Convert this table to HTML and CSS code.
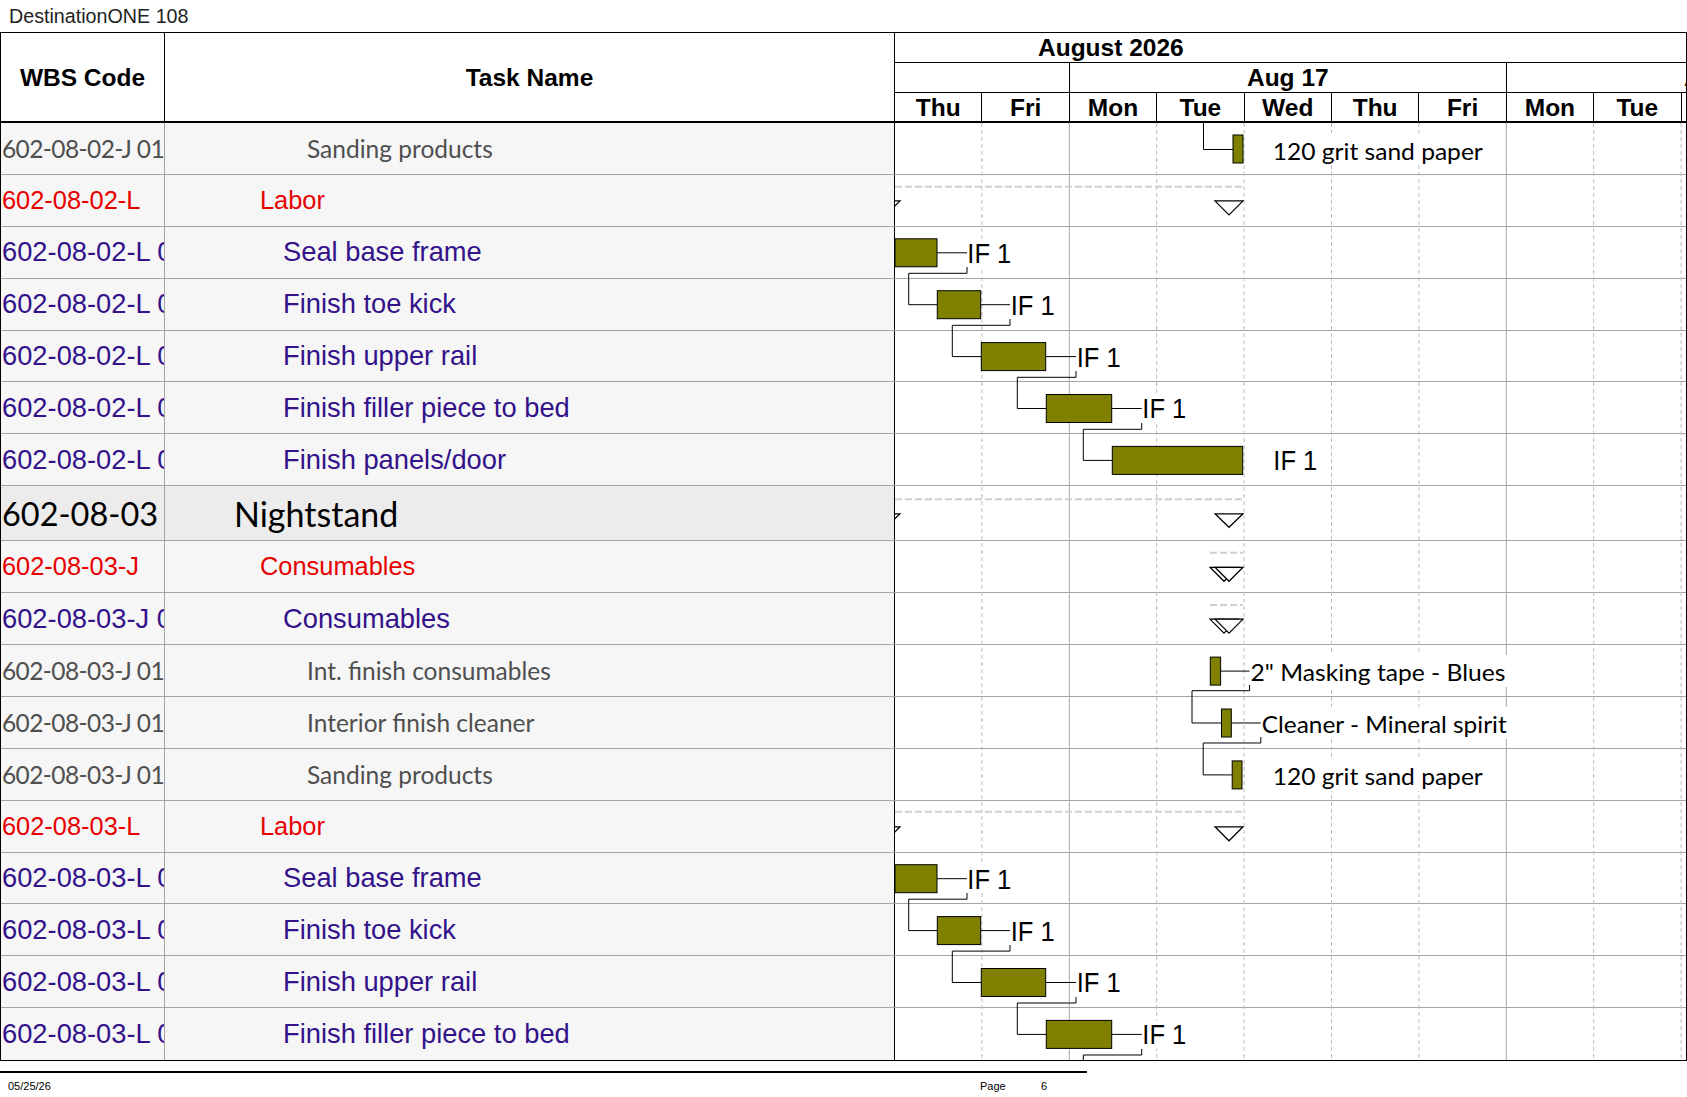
FILE: index.html
```html
<!DOCTYPE html>
<html lang="en">
<head>
<meta charset="utf-8">
<title>DestinationONE 108</title>
<link rel="stylesheet" href="styles.css">
</head>
<body>
<div class="title">DestinationONE 108</div>
<div class="sheet">
  <div class="head">
    <div class="h-cell h-wbs">WBS Code</div>
    <div class="h-cell h-task">Task Name</div>
    <div class="h-gantt">
      <div class="tl-month">August 2026</div>
      <div class="tl-week">
        <div class="wk wk-2"></div>
        <div class="wk wk-5">Aug 17</div>
        <div class="wk wk-5">Aug 24</div>
      </div>
      <div class="tl-day">
        <div class="day">Thu</div>
        <div class="day">Fri</div>
        <div class="day">Mon</div>
        <div class="day">Tue</div>
        <div class="day">Wed</div>
        <div class="day">Thu</div>
        <div class="day">Fri</div>
        <div class="day">Mon</div>
        <div class="day">Tue</div>
        <div class="day">Wed</div>
      </div>
    </div>
  </div>
  <div class="body">
    <div class="row lvl-4"><div class="c-wbs">602-08-02-J 01</div><div class="c-task">Sanding products</div><div class="c-gantt"></div></div>
    <div class="row lvl-2"><div class="c-wbs">602-08-02-L</div><div class="c-task">Labor</div><div class="c-gantt"></div></div>
    <div class="row lvl-3"><div class="c-wbs">602-08-02-L 01</div><div class="c-task">Seal base frame</div><div class="c-gantt"></div></div>
    <div class="row lvl-3"><div class="c-wbs">602-08-02-L 02</div><div class="c-task">Finish toe kick</div><div class="c-gantt"></div></div>
    <div class="row lvl-3"><div class="c-wbs">602-08-02-L 03</div><div class="c-task">Finish upper rail</div><div class="c-gantt"></div></div>
    <div class="row lvl-3"><div class="c-wbs">602-08-02-L 04</div><div class="c-task">Finish filler piece to bed</div><div class="c-gantt"></div></div>
    <div class="row lvl-3"><div class="c-wbs">602-08-02-L 05</div><div class="c-task">Finish panels/door</div><div class="c-gantt"></div></div>
    <div class="row lvl-1"><div class="c-wbs">602-08-03</div><div class="c-task">Nightstand</div><div class="c-gantt"></div></div>
    <div class="row lvl-2"><div class="c-wbs">602-08-03-J</div><div class="c-task">Consumables</div><div class="c-gantt"></div></div>
    <div class="row lvl-3"><div class="c-wbs">602-08-03-J 01</div><div class="c-task">Consumables</div><div class="c-gantt"></div></div>
    <div class="row lvl-4"><div class="c-wbs">602-08-03-J 01</div><div class="c-task">Int. finish consumables</div><div class="c-gantt"></div></div>
    <div class="row lvl-4"><div class="c-wbs">602-08-03-J 01</div><div class="c-task">Interior finish cleaner</div><div class="c-gantt"></div></div>
    <div class="row lvl-4"><div class="c-wbs">602-08-03-J 01</div><div class="c-task">Sanding products</div><div class="c-gantt"></div></div>
    <div class="row lvl-2"><div class="c-wbs">602-08-03-L</div><div class="c-task">Labor</div><div class="c-gantt"></div></div>
    <div class="row lvl-3"><div class="c-wbs">602-08-03-L 01</div><div class="c-task">Seal base frame</div><div class="c-gantt"></div></div>
    <div class="row lvl-3"><div class="c-wbs">602-08-03-L 02</div><div class="c-task">Finish toe kick</div><div class="c-gantt"></div></div>
    <div class="row lvl-3"><div class="c-wbs">602-08-03-L 03</div><div class="c-task">Finish upper rail</div><div class="c-gantt"></div></div>
    <div class="row lvl-3 last"><div class="c-wbs">602-08-03-L 04</div><div class="c-task">Finish filler piece to bed</div><div class="c-gantt"></div></div>

    <svg class="chart" viewBox="895 123 791 937.3" preserveAspectRatio="none" xmlns="http://www.w3.org/2000/svg">
      <g class="grid-d">
        <line x1="981.9" y1="123" x2="981.9" y2="1061"/>
        <line x1="1156.7" y1="123" x2="1156.7" y2="1061"/>
        <line x1="1244.1" y1="123" x2="1244.1" y2="1061"/>
        <line x1="1331.5" y1="123" x2="1331.5" y2="1061"/>
        <line x1="1418.9" y1="123" x2="1418.9" y2="1061"/>
        <line x1="1593.7" y1="123" x2="1593.7" y2="1061"/>
        <line x1="1681.1" y1="123" x2="1681.1" y2="1061"/>
      </g>
      <g class="grid-s">
        <line x1="1069.3" y1="123" x2="1069.3" y2="1061"/>
        <line x1="1506.3" y1="123" x2="1506.3" y2="1061"/>
      </g>
      <g class="sum-line">
        <line x1="895" y1="186.7" x2="1243" y2="186.7"/>
        <line x1="895" y1="499.3" x2="1243" y2="499.3"/>
        <line x1="1210" y1="552.7" x2="1243" y2="552.7"/>
        <line x1="1210" y1="605" x2="1243" y2="605"/>
        <line x1="895" y1="811.7" x2="1243" y2="811.7"/>
      </g>
      <g class="tri">
        <polygon points="872,200.9 900,200.9 886,214.9"/>
        <polygon points="1215,200.9 1243,200.9 1229,214.9"/>
        <polygon points="872,513.8 900,513.8 886,527.3"/>
        <polygon points="1215,513.8 1243,513.8 1229,527.3"/>
        <polygon points="1210,567.3 1238,567.3 1224,581.3"/>
        <polygon points="1215,567.3 1243,567.3 1229,581.3"/>
        <polygon points="1210,619.2 1238,619.2 1224,633.2"/>
        <polygon points="1215,619.2 1243,619.2 1229,633.2"/>
        <polygon points="872,826.8 900,826.8 886,840.8"/>
        <polygon points="1215,826.8 1243,826.8 1229,840.8"/>
      </g>
      <g class="link">
        <path d="M1203.5 123 V149.5 H1233"/>
        <path d="M937 252.8 H967"/>
        <path d="M967 267 V273.3 H908.7 V304.7 H937.3"/>
        <path d="M980.7 304.7 H1010"/>
        <path d="M1010 319 V325.3 H952.3 V356.6 H981.3"/>
        <path d="M1045.7 356.6 H1076"/>
        <path d="M1076 371 V377.3 H1017.3 V408.5 H1046.3"/>
        <path d="M1111.7 408.5 H1141.7"/>
        <path d="M1141.7 423 V429.3 H1083.3 V460.4 H1112.3"/>
        <path d="M1220.6 671.1 H1249.6"/>
        <path d="M1249.6 685 V690.7 H1192 V723 H1221.5"/>
        <path d="M1231.3 723 H1260.8"/>
        <path d="M1260.8 737 V743 H1203.2 V774.9 H1232.2"/>
        <path d="M937 878.7 H967"/>
        <path d="M967 893 V899.2 H908.7 V930.6 H937.3"/>
        <path d="M980.7 930.6 H1010"/>
        <path d="M1010 945 V951.1 H952.3 V982.5 H981.3"/>
        <path d="M1045.7 982.5 H1076"/>
        <path d="M1076 997 V1003 H1017.3 V1034.4 H1046.3"/>
        <path d="M1111.7 1034.4 H1141.7"/>
        <path d="M1141.7 1049 V1055 H1083.3 V1062"/>
      </g>
      <g class="bar">
        <rect x="1233" y="135" width="10" height="28"/>
        <rect x="895" y="238.8" width="42" height="28"/>
        <rect x="937.3" y="290.7" width="43.4" height="28"/>
        <rect x="981.3" y="342.6" width="64.4" height="28"/>
        <rect x="1046.3" y="394.5" width="65.4" height="28"/>
        <rect x="1112.3" y="446.4" width="130.4" height="28"/>
        <rect x="1210.3" y="657.1" width="10.3" height="28"/>
        <rect x="1221.5" y="709" width="9.8" height="28"/>
        <rect x="1232.2" y="760.9" width="9.8" height="28"/>
        <rect x="895" y="864.7" width="42" height="28"/>
        <rect x="937.3" y="916.6" width="43.4" height="28"/>
        <rect x="981.3" y="968.5" width="64.4" height="28"/>
        <rect x="1046.3" y="1020.4" width="65.4" height="28"/>
      </g>
      <g class="lbl-bg">
        <rect x="1270" y="133" width="216" height="32"/>
        <rect x="968" y="238.8" width="46" height="28"/>
        <rect x="1011" y="290.7" width="46" height="28"/>
        <rect x="1077" y="342.6" width="46" height="28"/>
        <rect x="1143" y="394.5" width="46" height="28"/>
        <rect x="1272" y="446.4" width="47" height="28"/>
        <rect x="1250.6" y="655" width="258" height="32"/>
        <rect x="1261.8" y="707" width="248" height="32"/>
        <rect x="1270" y="759" width="216" height="32"/>
        <rect x="968" y="864.7" width="46" height="28"/>
        <rect x="1011" y="916.6" width="46" height="28"/>
        <rect x="1077" y="968.5" width="46" height="28"/>
        <rect x="1143" y="1020.4" width="46" height="28"/>
      </g>
      <g class="lbl">
        <text class="t-cal" x="1272.8" y="160" textLength="210" lengthAdjust="spacingAndGlyphs">120 grit sand paper</text>
        <text class="t-if" x="967.3" y="262.8" textLength="44" lengthAdjust="spacingAndGlyphs">IF 1</text>
        <text class="t-if" x="1010.7" y="314.7" textLength="44" lengthAdjust="spacingAndGlyphs">IF 1</text>
        <text class="t-if" x="1076.7" y="366.6" textLength="44" lengthAdjust="spacingAndGlyphs">IF 1</text>
        <text class="t-if" x="1142.3" y="418.5" textLength="44" lengthAdjust="spacingAndGlyphs">IF 1</text>
        <text class="t-if" x="1273.3" y="470.4" textLength="44" lengthAdjust="spacingAndGlyphs">IF 1</text>
        <text class="t-cal" x="1250.5" y="681" textLength="255" lengthAdjust="spacingAndGlyphs">2" Masking tape - Blues</text>
        <text class="t-cal" x="1261.7" y="733" textLength="245" lengthAdjust="spacingAndGlyphs">Cleaner - Mineral spirit</text>
        <text class="t-cal" x="1272.8" y="785" textLength="210" lengthAdjust="spacingAndGlyphs">120 grit sand paper</text>
        <text class="t-if" x="967.3" y="888.7" textLength="44" lengthAdjust="spacingAndGlyphs">IF 1</text>
        <text class="t-if" x="1010.7" y="940.6" textLength="44" lengthAdjust="spacingAndGlyphs">IF 1</text>
        <text class="t-if" x="1076.7" y="992.5" textLength="44" lengthAdjust="spacingAndGlyphs">IF 1</text>
        <text class="t-if" x="1142.3" y="1044.4" textLength="44" lengthAdjust="spacingAndGlyphs">IF 1</text>
      </g>
    </svg>
  </div>
</div>
<div class="footer">
  <span class="f-date">05/25/26</span>
  <span class="f-page">Page</span>
  <span class="f-num">6</span>
</div>
</body>
</html>
```

FILE: styles.css
```css
* {
  box-sizing: border-box;
}

html,
body {
  margin: 0;
  padding: 0;
  background: #ffffff;
}

body {
  width: 1687px;
  height: 1097px;
  overflow: hidden;
  font-family: "Liberation Sans", Arial, sans-serif;
  color: #000;
}

.title {
  height: 32px;
  padding: 5px 0 0 9px;
  font-size: 19.7px;
  line-height: 22px;
  color: #222;
  white-space: nowrap;
}

.sheet {
  width: 1687px;
  border: 1px solid #000;
}

/* ---------- header ---------- */
.head {
  display: flex;
  height: 90px;
}

.h-cell {
  display: flex;
  align-items: center;
  justify-content: center;
  font-weight: bold;
  font-size: 24.5px;
  border-bottom: 2px solid #000;
  border-right: 1px solid #000;
  padding-top: 2px;
}

.h-wbs {
  width: 164px;
}

.h-task {
  width: 730px;
}

.h-gantt {
  width: 791px;
  display: flex;
  flex-direction: column;
  overflow: hidden;
}

.tl-month {
  height: 30px;
  border-bottom: 1px solid #000;
  padding-left: 143px;
  font-weight: bold;
  font-size: 24.5px;
  line-height: 29px;
  white-space: nowrap;
}

.tl-week,
.tl-day {
  display: flex;
  flex-wrap: nowrap;
}

.tl-week {
  height: 30px;
  border-bottom: 1px solid #000;
}

.tl-day {
  height: 30px;
  border-bottom: 2px solid #000;
}

.wk,
.day {
  flex: none;
  border-right: 1px solid #000;
  text-align: center;
  font-weight: bold;
  font-size: 24.5px;
  line-height: 29px;
  white-space: nowrap;
  overflow: hidden;
}

.wk-2 {
  width: 174.8px;
}

.wk-5 {
  width: 437px;
}

.day {
  width: 87.4px;
}

/* ---------- body rows ---------- */
.body {
  position: relative;
}

.row {
  display: flex;
  height: 51.9px;
  border-bottom: 1px solid #a4a4a4;
}

.row.last {
  border-bottom: none;
}

.c-wbs {
  width: 164px;
  flex: none;
  display: flex;
  align-items: center;
  padding-left: 1px;
  border-right: 1px solid #a4a4a4;
  background: #f6f6f6;
  white-space: nowrap;
  overflow: hidden;
}

.c-task {
  width: 730px;
  flex: none;
  display: flex;
  align-items: center;
  border-right: 1px solid #000;
  background: #f6f6f6;
  white-space: nowrap;
  overflow: hidden;
}

.c-gantt {
  flex: 1;
  background: #fff;
}

/* level 1: summary (Nightstand) */
.lvl-1 {
  height: 55px;
  color: #000;
  font-family: Lato, "Liberation Sans", sans-serif;
}

.lvl-1 .c-wbs,
.lvl-1 .c-task {
  background: #ececec;
}

.lvl-1 .c-wbs {
  font-size: 32.5px;
}

.lvl-1 .c-task {
  font-size: 34px;
  padding-left: 69px;
}

/* level 2: red group */
.lvl-2 {
  color: #e80000;
  font-size: 25.4px;
}

.lvl-2 .c-task {
  padding-left: 95px;
}

/* level 3: purple tasks */
.lvl-3 {
  color: #33128a;
  font-size: 27.3px;
}

.lvl-3 .c-task {
  padding-left: 118px;
}

/* level 4: grey items */
.lvl-4 {
  color: #4f4f4f;
  font-family: Lato, "Liberation Sans", sans-serif;
  font-size: 24.5px;
}

.lvl-4 .c-wbs {
  letter-spacing: -0.6px;
}

.lvl-4 .c-task {
  padding-left: 142px;
}

/* ---------- gantt chart canvas ---------- */
.chart {
  position: absolute;
  left: 894px;
  top: 0;
  width: 791px;
  height: 937.3px;
  overflow: hidden;
}

.grid-d line {
  stroke: #bdbdbd;
  stroke-width: 1;
  stroke-dasharray: 4 3;
}

.grid-s line {
  stroke: #a8a8a8;
  stroke-width: 1;
}

.sum-line line {
  stroke: #d0d0d0;
  stroke-width: 2;
  stroke-dasharray: 7 3;
}

.tri polygon {
  fill: #fff;
  stroke: #000;
  stroke-width: 1.2;
}

.link path {
  fill: none;
  stroke: #000;
  stroke-width: 1;
}

.bar rect {
  fill: #808000;
  stroke: #000;
  stroke-width: 1;
}

.lbl-bg rect {
  fill: #fff;
}

.t-if {
  font-family: "Liberation Sans", Arial, sans-serif;
  font-size: 28px;
  fill: #000;
}

.t-cal {
  font-family: Lato, "Liberation Sans", sans-serif;
  font-size: 23.5px;
  fill: #000;
}

/* ---------- footer ---------- */
.footer {
  width: 1087px;
  margin-top: 10px;
  border-top: 2px solid #000;
  display: flex;
  padding: 7px 0 0 8px;
  font-family: "Liberation Sans Narrow", "Liberation Sans", Arial, sans-serif;
  font-size: 11px;
  line-height: 12px;
  color: #000;
}

.f-date {
  width: 972px;
}

.f-page {
  width: 61px;
}
```
